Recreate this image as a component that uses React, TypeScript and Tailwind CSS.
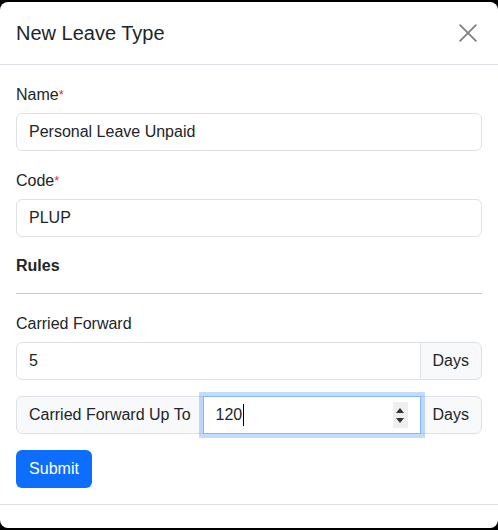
import React from 'react';

const font = { fontFamily: '"Liberation Sans", Arial, sans-serif' };

const Label = ({ text, required }: { text: string; required?: boolean }) => (
  <label className="block pt-[2px] mb-[6px] text-base leading-6 text-[#212529]">
    {text}
    {required && <span className="text-[#dc3545] text-[13px] align-top">*</span>}
  </label>
);

const TextField = ({ value }: { value: string }) => (
  <div className="h-[38px] w-full rounded-md border border-[#dee2e6] bg-white px-3 flex items-center text-base text-[#212529]">
    {value}
  </div>
);

const Addon = ({ children, className = '' }: { children: React.ReactNode; className?: string }) => (
  <div
    className={`h-[38px] flex items-center px-3 border border-[#dee2e6] bg-[#f8f9fa] text-base text-[#212529] whitespace-nowrap ${className}`}
  >
    {children}
  </div>
);

const Spinner = () => (
  <div className="w-[15px] h-[26px] bg-[#efefef] flex flex-col items-center justify-center gap-[5px]">
    <svg width="8" height="5" viewBox="0 0 8 5">
      <path d="M4 0 L8 5 L0 5 Z" fill="#333" />
    </svg>
    <svg width="8" height="5" viewBox="0 0 8 5">
      <path d="M0 0 L8 0 L4 5 Z" fill="#333" />
    </svg>
  </div>
);

export default function App() {
  return (
    <div className="min-h-[530px] bg-black pt-[2px]" style={font}>
      <div className="bg-white rounded-lg w-[498px] text-[#212529]">
        <div className="flex items-center justify-between p-4 border-b border-[#dee2e6]">
          <h5 className="text-[20px] leading-[30px] font-medium">New Leave Type</h5>
          <button className="w-6 h-6 flex items-center justify-center mr-[2px]">
            <svg width="18" height="18" viewBox="0 0 16 16">
              <path d="M1 1 L15 15 M15 1 L1 15" stroke="#808080" strokeWidth="1.6" strokeLinecap="round" />
            </svg>
          </button>
        </div>

        <div className="p-4">
          <div className="mb-4">
            <Label text="Name" required />
            <TextField value="Personal Leave Unpaid" />
          </div>
          <div className="mb-4">
            <Label text="Code" required />
            <TextField value="PLUP" />
          </div>
          <div className="font-bold text-base leading-6 pt-px -mb-px">Rules</div>
          <hr className="my-4 border-t border-[#c6c7c8]" />
          <div className="mb-4">
            <Label text="Carried Forward" />
            <div className="flex">
              <div className="h-[38px] flex-1 rounded-l-md border border-[#dee2e6] bg-white px-3 flex items-center text-base">
                5
              </div>
              <Addon className="-ml-px rounded-r-md">Days</Addon>
            </div>
          </div>
          <div className="flex mb-4">
            <Addon className="rounded-l-md">Carried Forward Up To</Addon>
            <div className="relative z-10 -ml-px h-[38px] flex-1 border border-[#86b7fe] bg-white pl-3 pr-[12px] flex items-center justify-between text-base shadow-[0_0_0_4px_rgba(13,110,253,0.25)]">
              <span className="flex items-center">
                120
                <span className="inline-block w-px h-[22px] bg-black ml-px" />
              </span>
              <Spinner />
            </div>
            <Addon className="-ml-px rounded-r-md">Days</Addon>
          </div>
          <button className="h-[38px] w-[76px] rounded-md bg-[#0d6efd] text-white text-base">Submit</button>
        </div>

        <div className="border-t border-[#dee2e6] h-[24px] rounded-b-lg" />
      </div>
    </div>
  );
}
